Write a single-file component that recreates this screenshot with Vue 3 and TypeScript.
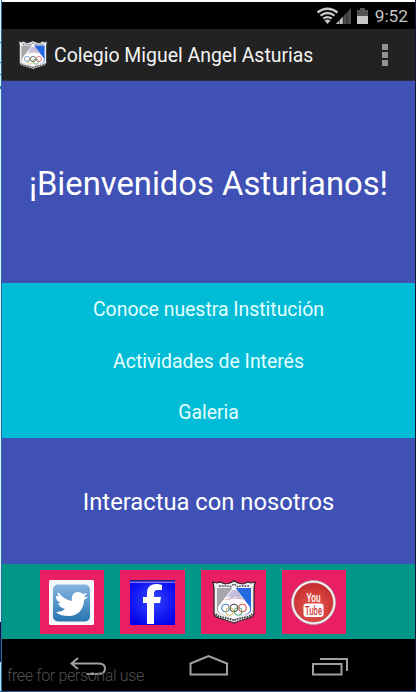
<script setup lang="ts">
import { h, type FunctionalComponent } from 'vue'

interface Ring { x: number; y: number; color: string }

const menu: string[] = ['Conoce nuestra Institución', 'Actividades de Interés', 'Galeria']
const rings: Ring[] = [
  { x: 13.5, y: 28, color: '#2c79b5' },
  { x: 22, y: 28, color: '#39363a' },
  { x: 30.5, y: 28, color: '#d9363c' },
  { x: 17.8, y: 31.5, color: '#d3b04a' },
  { x: 26.2, y: 31.5, color: '#3f9b62' },
]

const Crest: FunctionalComponent = () =>
  h('svg', { viewBox: '0 0 44 44' }, [
    h('path', { d: 'M1 2l4 1 3-1 5 2 5-1 4-2 4 2 5 1 5-2 3 1 4-1-1 6v25c0 6-9 5-20 10C11 38 2 39 2 33V8z', fill: '#f0eef0', stroke: '#24242b', 'stroke-width': 1.2 }),
    h('path', { d: 'M5 8h17v29C15 35 5 35 5 30z', fill: '#a6a6aa' }),
    h('path', { d: 'M22 8h17v22c0 5-10 5-17 7z', fill: '#2468e0' }),
    h('path', { d: 'M22 6L6 27v4c3 5 11 4 16 7 5-3 13-2 16-7v-4z', fill: '#fff' }),
    h('path', { d: 'M20 10l-6 8 5-2-3 4 7-3 8 2-6-9z', fill: '#c4bfdc' }),
    h('path', { d: 'M13 20l8-2 11 1M24 11l3 5', fill: 'none', stroke: '#cf9eab', 'stroke-width': 0.8 }),
    h('path', { d: 'M4 34c2 4 11 3 18 6.500 7-3.500 16-2.500 18-6.500', fill: 'none', stroke: '#3c3c44', 'stroke-width': 1.8, 'stroke-dasharray': '1.6 .9' }),
    h('path', { d: 'M7 6h9l2 1 4-3 4 3 2-1h9', fill: 'none', stroke: '#4a4a52', 'stroke-width': 1.3, 'stroke-dasharray': '1.8 1' }),
    ...rings.map((r) => h('circle', { cx: r.x, cy: r.y, r: 3.9, fill: 'none', stroke: r.color, 'stroke-width': 0.95 })),
  ])
</script>

<template>
  <div class="frame">
    <main class="phone">
      <header class="status">
        <svg class="signals" viewBox="0 0 56 18">
          <g fill="none" stroke="#c8c8c8" stroke-width="2.3">
            <path d="M1.5 5.5Q11.500-2 21.500 5.500" />
            <path d="M4.500 8.700Q11.500 3.400 18.500 8.700" />
            <path d="M7.300 11.700Q11.500 8.500 15.700 11.700" />
          </g>
          <path d="M8.500 13.500q3-2 6 0l-3 3.500z" fill="#c8c8c8" />
          <path d="M35 1v16H20z" fill="#4c4c4c" />
          <path d="M27 9.500V17h-7z" fill="#c8c8c8" />
          <path d="M27 0v18M31 0v18M23.500 0v18" stroke="#000" stroke-width=".5" />
          <path d="M44 1h5v2h3v6H41V3h3z" fill="#555" />
          <path d="M41 9h11v8H41z" fill="#c8c8c8" />
        </svg>
        <span class="clock">9:52</span>
      </header>
      <div class="bar">
        <Crest class="logo" />
        <h1>Colegio Miguel Angel Asturias</h1>
        <div class="dots"><i /><i /><i /></div>
      </div>
      <section class="welcome"><span>¡Bienvenidos Asturianos!</span></section>
      <nav class="menu">
        <a v-for="item in menu" :key="item">{{ item }}</a>
      </nav>
      <section class="interact"><span>Interactua con nosotros</span></section>
      <div class="social">
        <div class="tile first">
          <svg viewBox="0 0 45 45">
            <defs><linearGradient id="tw" x2="0" y2="1"><stop stop-color="#86b5df" /><stop offset="1" stop-color="#2675b2" /></linearGradient></defs>
            <rect width="45" height="45" rx="1.500" fill="#f7f8fa" />
            <rect x="4" y="4.500" width="37" height="37" rx="5" fill="url(#tw)" />
            <path d="M10 13c4 5 8 7 13 8-1-6 2-9 6-9 2 0 4 1 5 2l4-1-3 4 4 0-4 3c0 9-6 16-15 16-5 0-10-1-13-4 4 0 7-1 9-3-4-1-6-3-7-6h3c-4-2-5-4-5-7h3c-2-2-2-4 0-3z" fill="#fff" />
          </svg>
        </div>
        <div class="tile">
          <svg viewBox="0 0 45 45">
            <defs><radialGradient id="fb" cy=".45" r=".65"><stop stop-color="#3648ff" /><stop offset="1" stop-color="#0000ed" /></radialGradient></defs>
            <rect width="45" height="45" fill="url(#fb)" />
            <path d="M1 0h43l1 1.500H0z" fill="#18218a" />
            <path d="M0 2.200h45" stroke="#a8a5f6" />
            <path d="M17 44V23h-4v-6h4v-4c0-6 4-9 9-9 2 0 4 0 6 1v5h-4c-3 0-4 1-4 4v3h7l-1 6h-6v21z" fill="#fff" />
          </svg>
        </div>
        <div class="tile"><Crest class="crest" /></div>
        <div class="tile first">
          <svg viewBox="0 0 45 45">
            <defs><radialGradient id="yt" cy=".65" r=".6"><stop stop-color="#e85c50" /><stop offset="1" stop-color="#c82f30" /></radialGradient></defs>
            <circle cx="22.500" cy="22.500" r="22" fill="#fafafa" stroke="#b9a6ac" />
            <circle cx="22.500" cy="22.500" r="19.500" fill="url(#yt)" stroke="#b5444a" stroke-width=".7" />
            <rect x="12.500" y="23.500" width="20" height="13.500" rx="3" fill="#fff" />
            <text x="22.500" y="21.500" text-anchor="middle" textLength="14" lengthAdjust="spacingAndGlyphs" font-size="12.500" font-weight="500" fill="#fff">You</text>
            <text x="22.500" y="34.500" text-anchor="middle" textLength="17" lengthAdjust="spacingAndGlyphs" font-size="12" font-weight="500" fill="#cf3b39">Tube</text>
          </svg>
        </div>
      </div>
      <footer class="nav">
        <svg class="keys" viewBox="0 0 413 52" fill="none" stroke="#a0a0a0" stroke-width="2">
          <path d="M76 19l-6.500 5.500 6.500 5.500M70 24.500h26.500q6.500 0 6.500 5.200t-6.500 5.300H84.500" />
          <path d="M188.500 35.500V24.500l18-7.500 18.500 7.500v11z" />
          <path d="M311 25h28.500v10.500H311zM318 20h27v12" />
        </svg>
        <span class="mark">free for personal use</span>
      </footer>
    </main>
  </div>
</template>

<style>
body { margin: 0; overflow: hidden; }
</style>

<style scoped>
.frame {
  box-sizing: border-box; width: 416px; height: 692px; padding: 2px 1px 1px 2px;
  background:
    linear-gradient(90deg, transparent 0 1px, #2d6aa5 1px 2px, transparent 2px 415px, #101838 415px),
    linear-gradient(#fff 0 2px, #d5f5fa 2px 42px, #2875ad 42px 43px, #d5f5fa 43px 62px, #2875ad 62px 63px, #d5f5fa 63px 74px, #2875ad 74px 75px, #d5f5fa 75px 86px, #2875ad 86px 89px, #d5f5fa 89px 622px, #071638 622px 662px, #a9dff0 662px 691px, #2c5288 691px);
  font-family: Roboto, sans-serif; color: #fff;
}
.phone { display: flex; flex-direction: column; height: 689px; width: 413px; }
.status { height: 27px; background: #000; display: flex; justify-content: flex-end; align-items: center; padding-right: 7px; box-sizing: border-box; }
.signals { width: 56px; height: 18px; margin-right: 3px; }
.clock { color: #c3c3c3; font-size: 17.300px; line-height: 27px; padding-top: 1px; }
.bar { height: 52px; background: #222; display: flex; align-items: center; box-sizing: border-box; padding: 0 27px 0 16px; border-bottom: 1px solid #292c45; }
.logo { width: 30px; height: 30px; }
h1 { margin: 3px 0 0 6px; font-size: 19.450px; font-weight: 400; line-height: 26px; white-space: nowrap; color: #f3f3f3; }
.dots { margin-left: auto; display: grid; gap: 2px; }
.dots i { display: block; width: 6px; height: 6px; background: #929292; }
.welcome { height: 202px; background: #3f51b5; display: flex; align-items: center; justify-content: center; box-sizing: border-box; padding-top: 4px; font-size: 32.750px; white-space: nowrap; }
.menu { height: 155px; background: #00bcd6; display: grid; grid-template-rows: repeat(3, 51.600px); text-align: center; line-height: 53px; font-size: 19.400px; color: #e6ffff; }
.interact { height: 126px; background: #3f51b5; display: flex; align-items: center; justify-content: center; box-sizing: border-box; padding-top: 2px; font-size: 23.750px; white-space: nowrap; }
.social { height: 75px; background: #009688; box-sizing: border-box; padding: 6px 0 0 38px; display: grid; grid-template-columns: 64px 65px 65px 64px; grid-template-rows: 64px; gap: 16px; }
.tile { background: #e91e63; display: flex; align-items: center; justify-content: center; }
.first { justify-content: flex-start; padding-left: 9px; }
.tile svg { width: 45px; height: 45px; }
.tile .crest { width: 44px; height: 44px; }
.nav { height: 52px; background: #000; position: relative; }
.keys { display: block; width: 413px; height: 52px; }
.mark { position: absolute; left: 5px; top: 27px; font-size: 16px; letter-spacing: -.35px; line-height: 20px; font-weight: 300; color: #505050; white-space: nowrap; }
</style>
